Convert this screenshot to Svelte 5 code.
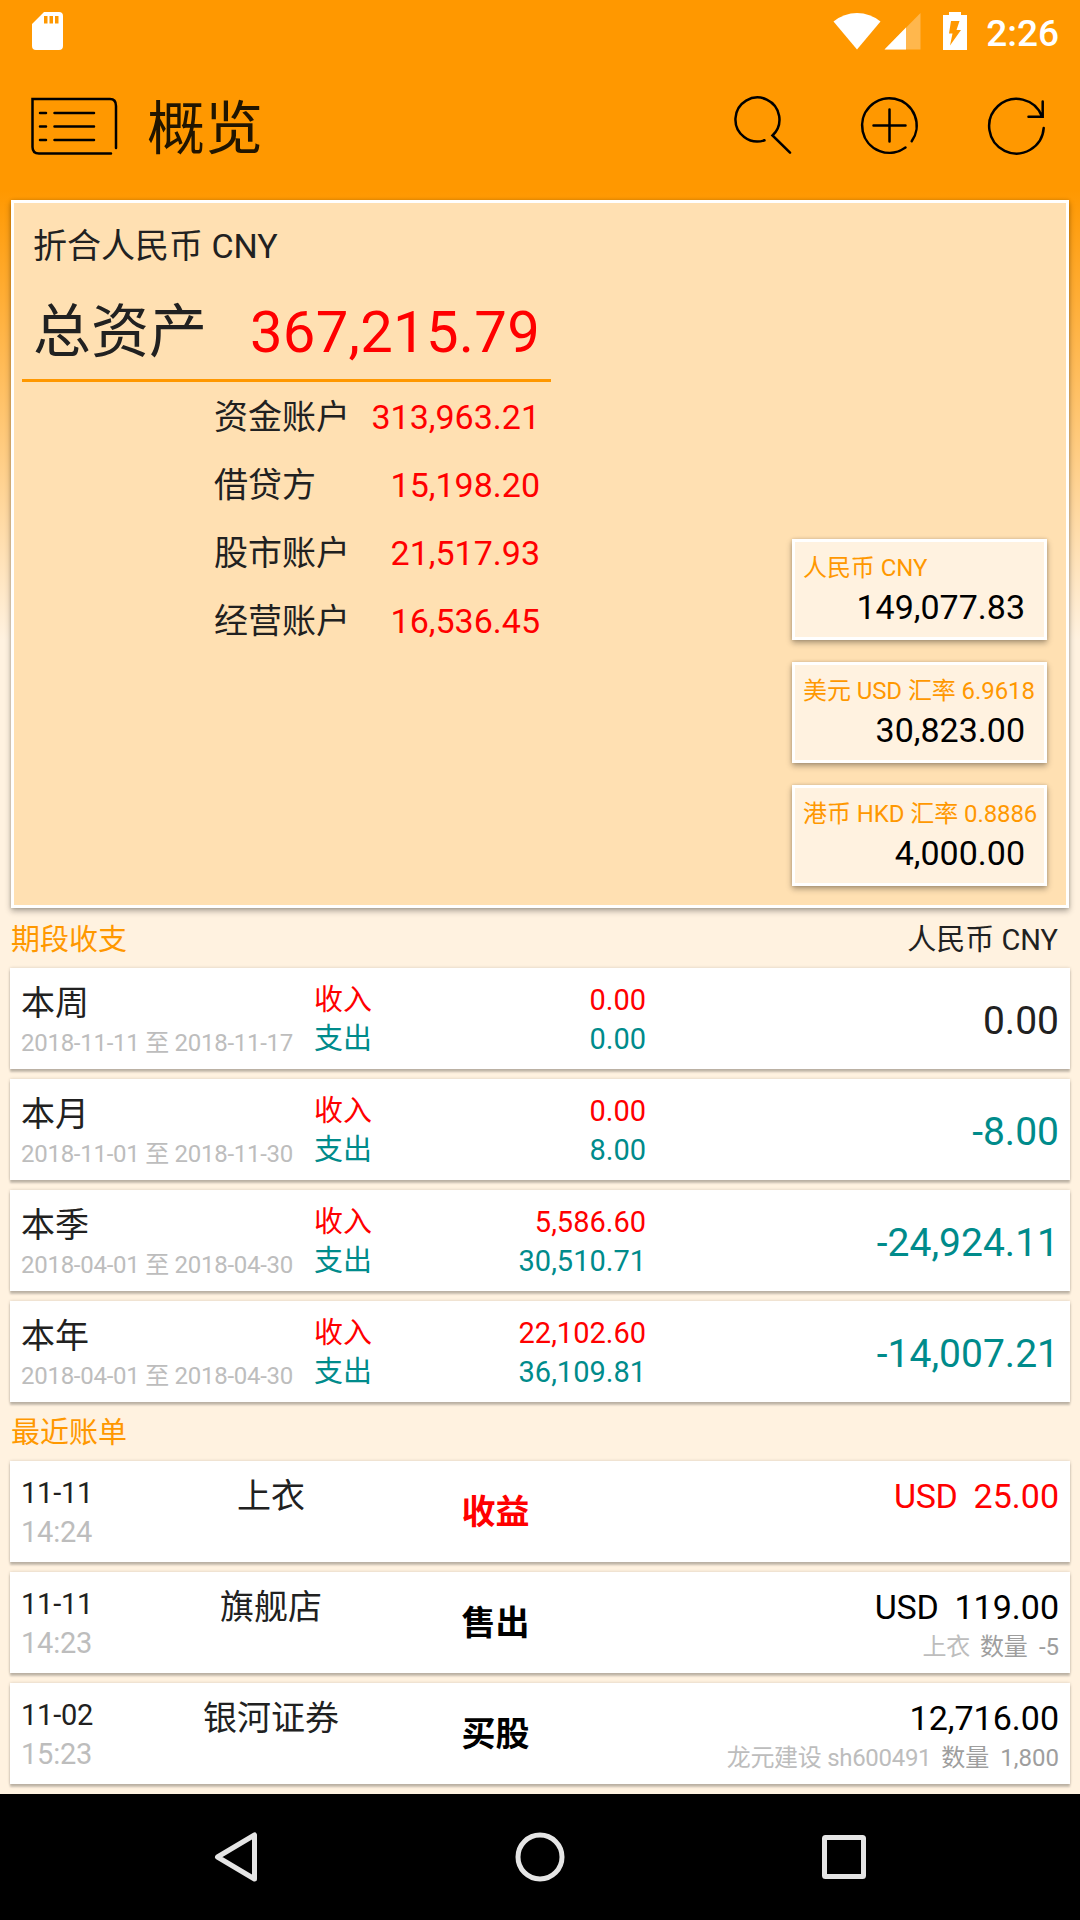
<script>
  const accounts = [
    { name: '资金账户', amount: '313,963.21' },
    { name: '借贷方', amount: '15,198.20' },
    { name: '股市账户', amount: '21,517.93' },
    { name: '经营账户', amount: '16,536.45' },
  ];

  const currencies = [
    { label: '人民币 CNY', amount: '149,077.83' },
    { label: '美元 USD 汇率 6.9618', amount: '30,823.00' },
    { label: '港币 HKD 汇率 0.8886', amount: '4,000.00' },
  ];

  const periods = [
    { name: '本周', range: '2018-11-11 至 2018-11-17', income: '0.00', expense: '0.00', total: '0.00' },
    { name: '本月', range: '2018-11-01 至 2018-11-30', income: '0.00', expense: '8.00', total: '-8.00' },
    { name: '本季', range: '2018-04-01 至 2018-04-30', income: '5,586.60', expense: '30,510.71', total: '-24,924.11' },
    { name: '本年', range: '2018-04-01 至 2018-04-30', income: '22,102.60', expense: '36,109.81', total: '-14,007.21' },
  ];

  const bills = [
    { date: '11-11', time: '14:24', name: '上衣', type: '收益', currency: 'USD', amount: '25.00', income: true },
    { date: '11-11', time: '14:23', name: '旗舰店', type: '售出', currency: 'USD', amount: '119.00', item: '上衣', quantity: '-5' },
    { date: '11-02', time: '15:23', name: '银河证券', type: '买股', amount: '12,716.00', item: '龙元建设 sh600491', quantity: '1,800' },
  ];
</script>

<div class="screen">
  <div class="status-bar">
    <svg class="sd" width="31" height="38" viewBox="0 0 31 38">
      <path fill="#fff" fill-rule="evenodd" d="M12 0H27Q31 0 31 4V34Q31 38 27 38H4Q0 38 0 34V12ZM12 4V11.5H15.5V4ZM17.5 4V11.5H21V4ZM23 4V11.5H26.5V4Z" />
    </svg>
    <svg class="wifi" width="48" height="37" viewBox="0 0 48 37">
      <path fill="#fff" d="M0.5 8.5Q11 0 24 0T47.5 8.5L24 36.5Z" />
    </svg>
    <svg class="signal" width="37" height="37" viewBox="0 0 37 37">
      <path fill="#fff" fill-opacity="0.3" d="M0.5 36.5L36.5 0V36.5Z" />
      <path fill="#fff" d="M0.5 36.5L22 14.5V36.5Z" />
    </svg>
    <svg class="battery" width="24" height="38" viewBox="0 0 24 38">
      <path fill="#fff" d="M6 0H18V3H24V38H0V3H6Z" />
      <path fill="#ff9800" d="M8 9H16.5L13.5 18H18L7 33.5L9.5 21.5H6Z" />
    </svg>
    <span class="clock">2:26</span>
  </div>

  <header class="toolbar">
    <svg class="menu" width="87" height="59" viewBox="0 0 87 59">
      <path d="M80 56.5H8Q1.5 56.5 1.5 50V2H79Q85 2 85 9V51" />
      <path d="M9 16H15M9 29.5H15M9 43H15M23.5 16H63M23.5 29.5H63M23.5 43H63" />
    </svg>
    <h1>概览</h1>
    <svg class="search" width="60" height="60" viewBox="0 0 60 60">
      <path d="M32.5 45.3A22 22 0 1 1 40.5 40.5L58 57.7" />
    </svg>
    <svg class="add" width="60" height="60" viewBox="0 0 60 60">
      <path d="M46.5 52.6A27.3 27.3 0 1 1 52.7 46.3M30.5 14.5V46.5M14.5 30.5H46.5" />
    </svg>
    <svg class="refresh" width="60" height="60" viewBox="0 0 60 60">
      <path d="M57.7 33A27.3 27.3 0 1 1 56 21.5M56.7 6.5V21.7H42.5" />
    </svg>
  </header>

  <section class="summary">
    <div class="assets">
      <div class="base">折合人民币 CNY</div>
      <div class="net">
        <span>总资产</span>
        <span class="sum red">367,215.79</span>
      </div>
      {#each accounts as account}
        <div class="account">
          <span>{account.name}</span>
          <span class="red">{account.amount}</span>
        </div>
      {/each}
    </div>
    <div class="currencies">
      {#each currencies as c}
        <div class="currency">
          <div class="label">{c.label}</div>
          <div class="value">{c.amount}</div>
        </div>
      {/each}
    </div>
  </section>

  <div class="heading">
    <span class="orange">期段收支</span>
    <span>人民币 CNY</span>
  </div>
  <div class="list">
    {#each periods as p}
      <div class="row period">
        <div>
          <div class="name">{p.name}</div>
          <div class="range">{p.range}</div>
        </div>
        <div class="flow">
          <div class="line red"><span>收入</span><span>{p.income}</span></div>
          <div class="line teal"><span>支出</span><span>{p.expense}</span></div>
        </div>
        <div class="total" class:teal={p.total.startsWith('-')}>{p.total}</div>
      </div>
    {/each}
  </div>

  <div class="heading recent">
    <span class="orange">最近账单</span>
  </div>
  <div class="list">
    {#each bills as b}
      <div class="row bill">
        <div class="when">
          <div>{b.date}</div>
          <div class="time">{b.time}</div>
        </div>
        <div class="name">{b.name}</div>
        <div class="type" class:red={b.income}>{b.type}</div>
        <div class="money">
          <div class="amount" class:red={b.income}>
            {#if b.currency}<span class="code">{b.currency}</span>{/if}{b.amount}
          </div>
          {#if b.item}
            <div class="note">
              <span class="item">{b.item}</span><span class="item-label">数量</span><span>{b.quantity}</span>
            </div>
          {/if}
        </div>
      </div>
    {/each}
  </div>

  <nav class="nav-bar">
    <div><svg width="50" height="50" viewBox="0 0 50 50"><path d="M43.5 3V47L6.5 25Z" /></svg></div>
    <div><svg width="50" height="50" viewBox="0 0 50 50"><circle cx="25" cy="25" r="22" /></svg></div>
    <div><svg width="50" height="50" viewBox="0 0 50 50"><rect x="5.5" y="5.5" width="39" height="39" rx="1" /></svg></div>
  </nav>
</div>

<style>
  :global(body) {
    background: #fff3e0;
  }

  .screen {
    display: flex;
    flex-direction: column;
    width: 1080px;
    height: 1920px;
    overflow: hidden;
    background: linear-gradient(#ff9800 190px, #fff2e0 640px);
    color: #212121;
    font-family: Roboto, "Noto Sans CJK SC", sans-serif;
    font-size: 34px;
  }

  svg {
    display: block;
    flex: none;
  }

  .red {
    color: #ff0000;
  }

  .teal {
    color: #008b8b;
  }

  .orange {
    color: #ff9800;
  }

  .status-bar {
    display: flex;
    align-items: flex-start;
    height: 60px;
    padding: 12px 21px 0 32px;
    box-sizing: border-box;
    color: #fff;
  }

  .wifi {
    margin: 1px 0 0 auto;
  }

  .signal {
    margin: 1px 22px 0 3px;
  }

  .clock {
    margin-left: 19px;
    font-size: 37px;
    font-weight: 500;
    line-height: 43px;
  }

  .toolbar {
    display: flex;
    align-items: center;
    height: 140px;
    padding: 0 34px 10px 31px;
    box-sizing: border-box;
  }

  .toolbar svg {
    fill: none;
    stroke: #000;
    stroke-width: 2.5;
    stroke-linecap: round;
  }

  .menu {
    margin-top: 3px;
  }

  h1 {
    flex: 1;
    margin: 8px 0 0 29px;
    color: #211500;
    font-size: 58px;
    font-weight: 400;
    line-height: 70px;
  }

  .add,
  .refresh {
    margin-left: 67px;
  }

  .summary {
    display: flex;
    justify-content: space-between;
    width: 1058px;
    height: 708px;
    margin-left: 11px;
    box-sizing: border-box;
    border: 3px solid #fff;
    background: #ffe0b2;
    box-shadow: 0 3px 6px rgba(0, 0, 0, 0.32), 0 0 3px rgba(0, 0, 0, 0.15);
  }

  .assets {
    width: 529px;
    margin-left: 8px;
  }

  .base {
    padding-left: 11px;
    line-height: 86px;
  }

  .net {
    display: flex;
    justify-content: space-between;
    height: 90px;
    margin-bottom: 1px;
    padding: 0 11px;
    border-bottom: 3px solid #ff9800;
    font-size: 58px;
    line-height: 86px;
  }

  .sum {
    letter-spacing: 0.25px;
  }

  .account {
    display: flex;
    justify-content: space-between;
    padding: 0 11px 0 192px;
    line-height: 68px;
  }

  .currencies {
    display: flex;
    flex-direction: column;
    justify-content: flex-end;
    gap: 22px;
    margin: 0 19px 19px 0;
  }

  .currency {
    width: 255px;
    height: 101px;
    padding: 11px 0 0 8px;
    box-sizing: border-box;
    border: 3px solid #fff;
    background: #fff2e0;
    box-shadow: 0 3px 6px rgba(0, 0, 0, 0.32), 0 0 3px rgba(0, 0, 0, 0.15);
  }

  .label {
    color: #ff9800;
    font-size: 24px;
    letter-spacing: -0.08px;
    line-height: 30px;
    white-space: nowrap;
  }

  .value {
    padding-right: 19px;
    color: #000;
    line-height: 49px;
    text-align: right;
  }

  .heading {
    display: flex;
    justify-content: space-between;
    height: 60px;
    padding: 4px 22px 0 11px;
    box-sizing: border-box;
    font-size: 29px;
    line-height: 56px;
  }

  .recent {
    height: 59px;
    padding-top: 3px;
  }

  .list {
    display: grid;
    gap: 10px;
    padding: 0 10px;
  }

  .row {
    display: grid;
    height: 101px;
    padding: 12px 11px 0;
    box-sizing: border-box;
    background: #fff;
    box-shadow: 0 3px 2px rgba(0, 0, 0, 0.22), 0 0 3px rgba(0, 0, 0, 0.16);
  }

  .period {
    grid-template-columns: 293px 332px 1fr;
  }

  .name {
    line-height: 46px;
  }

  .range {
    color: #bdbdbd;
    font-size: 24px;
    letter-spacing: -0.27px;
    line-height: 35px;
    white-space: nowrap;
  }

  .flow,
  .when {
    padding-top: 1px;
  }

  .line {
    display: flex;
    justify-content: space-between;
    font-size: 29px;
    line-height: 39px;
  }

  .total {
    font-size: 39px;
    line-height: 83px;
    text-align: right;
  }

  .bill {
    grid-template-columns: 121px 258px 191px 1fr;
  }

  .when {
    font-size: 29px;
    letter-spacing: -0.2px;
    line-height: 39px;
  }

  .time {
    color: #bdbdbd;
  }

  .bill .name,
  .type {
    text-align: center;
  }

  .type {
    font-weight: 700;
    line-height: 79px;
  }

  .type:not(.red),
  .amount:not(.red) {
    color: #000;
  }

  .money {
    text-align: right;
    white-space: nowrap;
  }

  .amount {
    line-height: 46px;
  }

  .code {
    margin-right: 16px;
    letter-spacing: -0.3px;
  }

  .note {
    color: #9e9e9e;
    font-size: 24px;
    line-height: 35px;
  }

  .item {
    color: #bdbdbd;
    letter-spacing: -0.3px;
  }

  .item-label {
    margin: 0 11px 0 10px;
  }

  .nav-bar {
    display: flex;
    justify-content: center;
    align-items: center;
    height: 126px;
    margin-top: auto;
    background: #000;
  }

  .nav-bar div {
    display: flex;
    justify-content: center;
    width: 304px;
  }

  .nav-bar svg {
    fill: none;
    stroke: #e5e5e5;
    stroke-width: 5;
    stroke-linejoin: round;
  }
</style>
